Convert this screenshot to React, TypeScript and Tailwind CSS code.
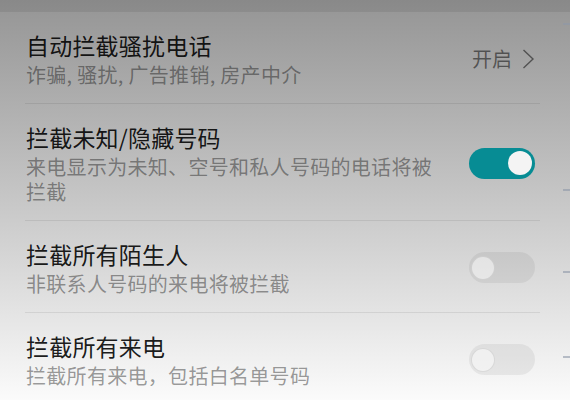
interface Item {
  title: string
  desc: string
  kind: 'link' | 'on' | 'off'
}

const ITEMS: Item[] = [
  { title: '自动拦截骚扰电话', desc: '诈骗, 骚扰, 广告推销, 房产中介', kind: 'link' },
  { title: '拦截未知/隐藏号码', desc: '来电显示为未知、空号和私人号码的电话将被拦截', kind: 'on' },
  { title: '拦截所有陌生人', desc: '非联系人号码的来电将被拦截', kind: 'off' },
  { title: '拦截所有来电', desc: '拦截所有来电，包括白名单号码', kind: 'off' },
]

function Toggle({ on }: { on: boolean }) {
  return on ? (
    <div className="w-[66px] h-[31px] rounded-full bg-[#078c94] flex items-center justify-end px-[3px] shrink-0">
      <div className="w-[24px] h-[24px] rounded-full bg-[#f4f4f4]" />
    </div>
  ) : (
    <div className="w-[66px] h-[31px] rounded-full bg-black/[0.06] flex items-center px-[2px] shrink-0">
      <div className="w-[24px] h-[24px] rounded-full bg-white/50 border border-black/10" />
    </div>
  )
}

export default function App() {
  return (
    <div
      className="relative w-full h-[400px] overflow-hidden bg-linear-to-b from-[#959595] to-[#fbfbfb]"
      style={{ fontFamily: '"Noto Sans CJK SC", "Noto Sans", sans-serif' }}
    >
      <div className="h-[12px] bg-black/[0.08]" />

      {ITEMS.map((it, i) => (
        <div key={it.title}>
          {i > 0 && <div className="h-px ml-[25px] mr-[30px] bg-black/[0.08]" />}
          <div className="flex items-center pl-[26px] pr-[35px] pt-[18px] pb-[16px]">
            <div className="w-[420px]">
              <div className="text-[23px] leading-[30px] text-black/90 tracking-[0.2px]">{it.title}</div>
              <div className="mt-[2px] text-[20px] leading-[25px] text-black/40 tracking-[0.3px]">{it.desc}</div>
            </div>
            <div className="flex-1" />
            {it.kind === 'link' ? (
              <div className="flex items-center gap-[10px] text-[20px] text-black/50">
                <span>开启</span>
                <svg width="13" height="22" viewBox="0 0 13 22" fill="none">
                  <polyline points="1.5,2 11,11 1.5,20" stroke="currentColor" strokeWidth="1.4" />
                </svg>
              </div>
            ) : (
              <Toggle on={it.kind === 'on'} />
            )}
          </div>
        </div>
      ))}

      {/* edge ticks */}
      <div className="absolute right-0 top-[23px] w-[7px] h-[2px] bg-[#8d97a8]/60" />
      <div className="absolute right-0 top-[189px] w-[7px] h-[2px] bg-[#8d97a8]/60" />
      <div className="absolute right-0 top-[271px] w-[7px] h-[2px] bg-[#8d97a8]/60" />
      <div className="absolute right-0 top-[356px] w-[7px] h-[2px] bg-[#8d97a8]/60" />
    </div>
  )
}
